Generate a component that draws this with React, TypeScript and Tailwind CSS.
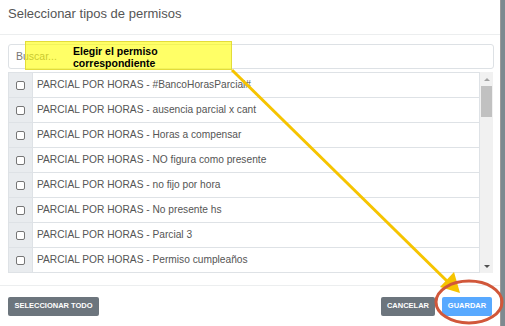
import React from 'react';

const permisos = [
  'PARCIAL POR HORAS - #BancoHorasParcial#',
  'PARCIAL POR HORAS - ausencia parcial x cant',
  'PARCIAL POR HORAS - Horas a compensar',
  'PARCIAL POR HORAS - NO figura como presente',
  'PARCIAL POR HORAS - no fijo por hora',
  'PARCIAL POR HORAS - No presente hs',
  'PARCIAL POR HORAS - Parcial 3',
  'PARCIAL POR HORAS - Permiso cumpleaños',
];

function Row({ label }: { label: string }) {
  return (
    <div className="flex h-[26px] shrink-0 border border-[#dee2e6] -mt-px first:mt-0">
      <div className="w-[24px] bg-[#e9ecef] flex items-center justify-center border-r border-[#dee2e6]">
        <span className="w-[9px] h-[9px] border border-[#767676] rounded-[2px] bg-white" />
      </div>
      <div className="flex-1 flex items-center pl-[4px] text-[10.2px] text-[#555]">{label}</div>
    </div>
  );
}

export default function App() {
  return (
    <div className="w-[505px] h-[326px] flex bg-[#7d8a90] overflow-hidden" style={{ fontFamily: '"Liberation Sans", Arial, sans-serif' }}>
      <div className="relative w-[501px] h-full bg-white border-r border-[#9a9a9a] flex flex-col">
        <div className="h-[35px] shrink-0 px-2 pt-[5px] border-b border-[#eceeef]">
          <h2 className="text-[13px] text-[#555] leading-[18px]">Seleccionar tipos de permisos</h2>
        </div>

        <div className="flex-1 px-2 pt-[9px]">
          <div className="h-[25px] w-[486px] border border-[#dde1e5] rounded-[3px] flex items-center px-[7px] text-[10.5px] text-[#777]">
            Buscar...
          </div>
          <div className="mt-[3px] h-[201px] w-[485px] flex overflow-hidden">
            <div className="flex-1 flex flex-col overflow-hidden">
              {permisos.map((p) => (
                <Row key={p} label={p} />
              ))}
              <div className="flex h-[26px] shrink-0 border border-[#dee2e6] -mt-px">
                <div className="w-[24px] bg-[#e9ecef] border-r border-[#dee2e6]" />
              </div>
            </div>
            <div className="w-[13px] bg-[#f1f1f1] flex flex-col items-center">
              <div className="h-[14px] flex items-center justify-center">
                <span className="w-0 h-0 border-l-[3px] border-r-[3px] border-b-[3px] border-l-transparent border-r-transparent border-b-[#a3a3a3]" />
              </div>
              <div className="w-[11px] h-[31px] bg-[#c1c1c1]" />
              <div className="flex-1" />
              <div className="h-[14px] flex items-center justify-center">
                <span className="w-0 h-0 border-l-[3px] border-r-[3px] border-t-[3px] border-l-transparent border-r-transparent border-t-[#505050]" />
              </div>
            </div>
          </div>
        </div>

        <div className="h-[41px] shrink-0 border-t border-[#eceeef] px-2 flex items-center">
          <button className="h-[19px] w-[91px] rounded-[2px] bg-[#6c757d] text-white text-[7.5px] font-bold">SELECCIONAR TODO</button>
          <div className="flex-1" />
          <button className="h-[19px] w-[54px] rounded-[2px] bg-[#6c757d] text-white text-[7.5px] font-bold">CANCELAR</button>
          <button className="ml-[7px] h-[19px] w-[50px] rounded-[2px] bg-[#58a9ff] text-white text-[7.5px] font-bold">GUARDAR</button>
        </div>

        <div className="absolute left-[25px] top-[41px] w-[207px] h-[29px] bg-[#ffff00]/60 border border-[#e3dc3a]">
          <p className="pl-[47px] pt-[3px] text-[10.5px] leading-[12px] font-bold text-black">
            Elegir el permiso<br />correspondiente
          </p>
        </div>

        <svg className="absolute left-0 top-0 pointer-events-none" width="505" height="326" viewBox="0 0 505 326">
          <line x1="232" y1="70" x2="450" y2="284" stroke="#f6c400" strokeWidth="3" />
          <polygon points="460,293 440,287 454,272" fill="#f6c400" />
          <ellipse cx="469" cy="302" rx="33" ry="21" fill="none" stroke="#d1573a" strokeWidth="3" />
        </svg>
      </div>
    </div>
  );
}
